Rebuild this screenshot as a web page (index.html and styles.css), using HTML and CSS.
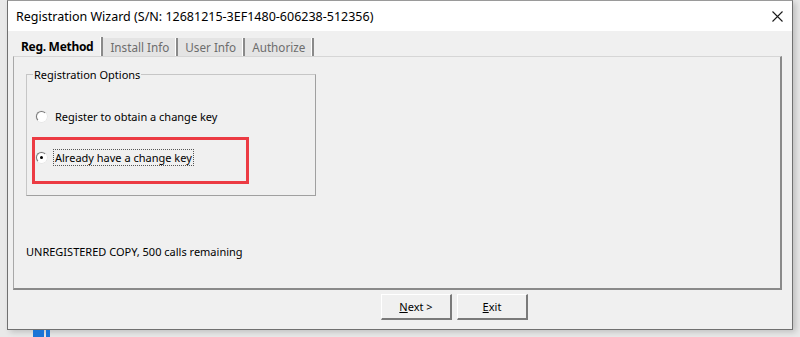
FILE: index.html
```html
<!DOCTYPE html>
<html lang="en">
<head>
    <meta charset="UTF-8">
    <title>Registration Wizard</title>
    <link rel="stylesheet" href="styles.css">
</head>
<body>
    <div class="window">
        <div class="titlebar">
            <span class="title">Registration Wizard (S/N: 12681215-3EF1480-606238-512356)</span>
            <span class="close-btn">
                <svg width="11" height="11" viewBox="0 0 11 11"><path d="M0.5 0.5L10.5 10.5M10.5 0.5L0.5 10.5" stroke="#1a1a1a" stroke-width="1.1" fill="none"/></svg>
            </span>
        </div>
        <div class="client">
            <div class="tabs">
                <div class="tab active">Reg. Method</div>
                <div class="tab">Install Info</div>
                <div class="tab">User Info</div>
                <div class="tab">Authorize</div>
            </div>
            <div class="panel">
                <fieldset class="group">
                    <legend>Registration Options</legend>
                    <div class="option">
                        <span class="radio"></span>
                        <span class="label">Register to obtain a change key</span>
                    </div>
                    <div class="option">
                        <span class="radio checked"></span>
                        <span class="label focused">Already have a change key</span>
                    </div>
                    <div class="highlight"></div>
                </fieldset>
                <div class="status">UNREGISTERED COPY, 500 calls remaining</div>
            </div>
            <div class="buttons">
                <button class="btn"><u>N</u>ext &gt;</button>
                <button class="btn"><u>E</u>xit</button>
            </div>
        </div>
    </div>
    <div class="desktop-icon">
        <span class="pane wide"></span>
        <span class="pane"></span>
    </div>
</body>
</html>
```

FILE: styles.css
```css
body {
    margin: 0;
    padding: 0;
    width: 800px;
    height: 337px;
    overflow: hidden;
    background-color: #e9e9e9;
    font-family: "Noto Sans", "Open Sans", sans-serif;
    font-size: 11px;
    color: #000;
}

.window {
    margin-left: 7px;
    width: 784px;
    border: 1px solid #707070;
    border-top-color: #9a9a9a;
    background-color: #f0f0f0;
    box-shadow: 3px 2px 6px rgba(0, 0, 0, 0.18);
}

.titlebar {
    height: 30px;
    background-color: #fff;
    display: flex;
    align-items: center;
    justify-content: space-between;
    padding-left: 8px;
    padding-right: 9px;
}

.title {
    font-size: 12.5px;
    color: #000;
}

.close-btn {
    display: flex;
    padding-top: 1px;
}

.client {
    padding: 6px 10px 9px 5px;
}

/* Tabs */
.tabs {
    display: flex;
    height: 19px;
    font-size: 11.7px;
}

.tab {
    display: flex;
    align-items: center;
    padding: 0 7px 0 7px;
    color: #6d6d6d;
    background-color: #e4e4e4;
    border-right: 2px solid #8a8a8a;
    box-shadow: inset -1px 0 0 #fff;
    margin-top: 1px;
}

.tab.active {
    color: #000;
    font-size: 12px;
    font-weight: bold;
    background-color: #f0f0f0;
    padding: 0 8px 0 8px;
    margin-top: 0;
    letter-spacing: -0.3px;
}

.panel {
    height: 231px;
    border: 1px solid #d6d6d6;
    border-right: 2px solid #8a8a8a;
    border-bottom: 2px solid #8a8a8a;
    border-left-color: #a8a8a8;
    padding: 0 12px;
    display: flex;
    flex-direction: column;
}

/* Group box */
.group {
    position: relative;
    width: 279px;
    height: 101px;
    margin: 10px 0 0 0;
    padding: 26px 0 0 9px;
    border: 1px solid #c6c6c6;
    border-right-color: #a0a0a0;
    border-bottom-color: #a0a0a0;
}

.group legend {
    padding: 0 1px;
    margin-left: -3px;
}

.option {
    display: flex;
    align-items: center;
    height: 17px;
    margin-bottom: 24px;
}

.radio {
    width: 9px;
    height: 9px;
    border-radius: 50%;
    border: 1px solid #fff;
    border-top-color: #777;
    border-left-color: #777;
    background-color: #fff;
    margin-right: 6px;
    position: relative;
    box-shadow: 0 0 0 0.5px #ddd;
}

.radio.checked::after {
    content: "";
    position: absolute;
    left: 3px;
    top: 3px;
    width: 3px;
    height: 3px;
    border-radius: 50%;
    background-color: #000;
}

.label {
    padding: 0 1px;
    border: 1px solid transparent;
}

.label.focused {
    border: 1px dotted #555;
}

.highlight {
    position: absolute;
    left: 5px;
    top: 55px;
    width: 211px;
    height: 41px;
    border: 3px solid #ec3b43;
}

.status {
    margin-top: auto;
    margin-bottom: 29px;
}

/* Buttons */
.buttons {
    display: flex;
    gap: 5px;
    padding: 4px 0 0 368px;
}

.btn {
    width: 71px;
    height: 26px;
    font-family: inherit;
    font-size: 11px;
    background-color: #f0f0f0;
    border: 1px solid #fff;
    border-right: 2px solid #7a7a7a;
    border-bottom: 2px solid #7a7a7a;
    color: #000;
    padding: 0;
}

.desktop-icon {
    display: flex;
    gap: 2px;
    margin-left: 33px;
    height: 8px;
}

.pane {
    width: 4px;
    background-color: #1b74d6;
}

.pane.wide {
    width: 11px;
}
```
